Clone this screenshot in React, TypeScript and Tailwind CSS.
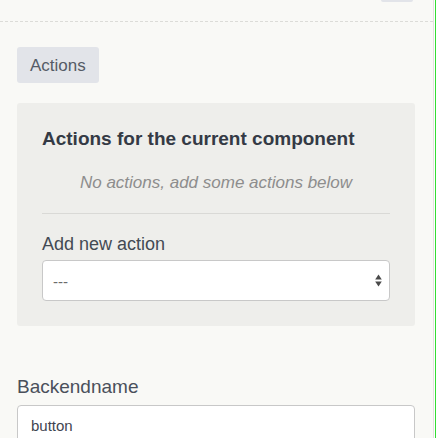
const font = { fontFamily: '"Liberation Sans", Arial, sans-serif' };

const SelectArrows = () => (
  <svg width="7" height="13" viewBox="0 0 7 13" className="text-[#4a4a4a]">
    <path d="M3.5 0.5 L6.8 5.5 L0.2 5.5 Z" fill="currentColor" />
    <path d="M3.5 12.5 L6.8 7.5 L0.2 7.5 Z" fill="currentColor" />
  </svg>
);

const App = () => {
  return (
    <div className="flex h-[438px] w-[437px] overflow-hidden bg-white" style={font}>
      <div className="w-[434px] shrink-0 border-r border-[#e3e3df] bg-[#f9f9f6]">
        {/* Header strip */}
        <div className="flex h-[22px] justify-end border-b border-dashed border-[#dcdcd8]">
          <div className="mr-[20px] h-[2px] w-[32px] rounded-b bg-[#e2e4e9]" />
        </div>

        <div className="pl-[17px] pr-[18px]">
          {/* Tab tag */}
          <div className="mt-[25px] inline-flex h-[36px] items-center rounded-[3px] bg-[#e2e4e9] px-[13px] pt-[2px] text-[17px] text-[#555b66]">
            Actions
          </div>

          {/* Actions panel */}
          <div className="mt-[20px] rounded-[3px] bg-[#eeeeeb] px-[25px] pt-[25px] pb-[25px]">
            <h2 className="text-[19px] leading-[22px] font-bold text-[#343a45]">
              Actions for the current component
            </h2>
            <p className="mt-[23px] text-center text-[17px] leading-[20px] italic text-[#8d8d8d]">
              No actions, add some actions below
            </p>
            <hr className="mt-[20px] border-t border-[#d9d9d6]" />
            <label className="mt-[19px] block text-[18px] leading-[22px] text-[#434a54]">
              Add new action
            </label>
            <div className="mt-[5px] flex h-[41px] items-center justify-between rounded-[4px] border border-[#c8c8c8] bg-white pl-[10px] pr-[7px] text-[15px] text-[#6b6b6b]">
              <span className="pt-[3px]">---</span>
              <SelectArrows />
            </div>
          </div>

          {/* Backendname */}
          <label className="mt-[50px] block text-[19px] leading-[22px] text-[#4a505b]">
            Backendname
          </label>
          <div className="mt-[7px] flex h-[40px] items-center rounded-[4px] border border-[#c8c8c8] bg-white pl-[13px] pt-[2px] text-[15px] text-[#3f4550]">
            button
          </div>
        </div>
      </div>
      <div className="ml-[1px] w-[1px] shrink-0 bg-[#33dd33]" />
    </div>
  );
};

export default App;
